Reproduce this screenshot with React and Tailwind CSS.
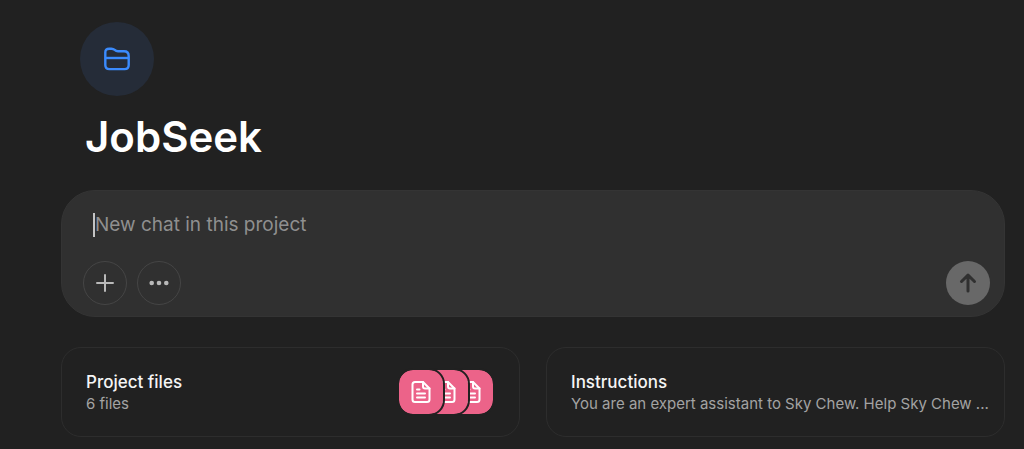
import React from "react";

function FolderIcon() {
  return (
    <svg width="26" height="24" viewBox="0 0 26 24" fill="none" stroke="#3b8bfd" strokeWidth="2.4" strokeLinejoin="round" aria-hidden="true">
      <path d="M1.300 18V5.600C1.300 3.200 2.700 1.700 5.200 1.700H7.400C8.900 1.700 9.800 2.100 10.700 2.900C11.700 3.900 12.500 4.300 14 4.300H20C23.200 4.300 24.700 5.900 24.700 9V18C24.700 20.800 23.400 22.100 20.600 22.100H5.400C2.600 22.100 1.300 20.800 1.300 18Z" />
      <path d="M1.300 11H24.700" />
    </svg>
  );
}

function DocumentIcon() {
  return (
    <svg width="20" height="24" viewBox="0 0 20 24" fill="none" stroke="#ffffff" strokeWidth="2" strokeLinecap="round" strokeLinejoin="round" aria-hidden="true">
      <path d="M12 2H4C2.400 2 1.500 2.900 1.500 4.500V19.500C1.500 21.100 2.400 22 4 22H16C17.600 22 18.500 21.100 18.500 19.500V8.500L12 2Z" />
      <path d="M12 2V6.500C12 7.800 12.700 8.500 14 8.500H18.500" />
      <path d="M6 9.500H8.500M6 13.500H14M6 17.500H14" />
    </svg>
  );
}

function FileTile({ className }) {
  return (
    <span className={`box-content flex h-11 w-11 items-center justify-center rounded-[16px] border-2 border-[#212121] bg-[#ec6389] bg-clip-padding ${className}`}>
      <DocumentIcon />
    </span>
  );
}

function RoundButton({ label, children }) {
  return (
    <button type="button" aria-label={label} className="flex h-11 w-11 items-center justify-center rounded-full border border-[#454545] text-[#b9b9b9]">
      {children}
    </button>
  );
}

function Card({ title, detail, children }) {
  return (
    <button type="button" className="flex min-w-0 items-center justify-between gap-4 rounded-[20px] border border-[#2d2d2d] py-[22px] pr-[14px] pl-6 text-left">
      <span className="min-w-0">
        <span className="block text-[17px] leading-6 font-medium text-[#f5f5f5]">{title}</span>
        <span className="block truncate text-[15px] leading-5 text-[#a3a3a3]">{detail}</span>
      </span>
      {children}
    </button>
  );
}

export default function App() {
  return (
    <main className="min-h-screen bg-[#212121] pt-[22px] pr-[19px] pb-3 pl-[61px] font-['Inter',sans-serif] text-white">
      <header className="pl-[19px]">
        <div className="flex h-[74px] w-[74px] items-center justify-center rounded-full bg-[#252c38]">
          <FolderIcon />
        </div>
        <h1 className="mt-[17px] pl-[5px] text-[42px] leading-[48px] font-semibold">JobSeek</h1>
      </header>

      <form className="mt-[29px] rounded-[34px] border border-[#343434] bg-[#303030] px-[14px] pt-5 pb-[11px]" onSubmit={(e) => e.preventDefault()}>
        <div className="flex items-center pl-[17px]">
          <span className="h-6 w-[2px] bg-[#c4c4c4]" aria-hidden="true" />
          <input aria-label="New chat in this project" placeholder="New chat in this project" className="min-w-0 flex-1 bg-transparent text-[19px] leading-7 outline-none placeholder:text-[#8f8f8f]" />
        </div>
        <div className="mt-[22px] flex items-center gap-[10px] pl-[7px]">
          <RoundButton label="Add">
            <svg width="18" height="18" viewBox="0 0 18 18" fill="none" stroke="currentColor" strokeWidth="2" strokeLinecap="round">
              <path d="M9 1V17M1 9H17" />
            </svg>
          </RoundButton>
          <RoundButton label="More options">
            <svg width="20" height="6" viewBox="0 0 20 6" fill="currentColor">
              <circle cx="2.700" cy="3" r="2.300" />
              <circle cx="10" cy="3" r="2.300" />
              <circle cx="17.300" cy="3" r="2.300" />
            </svg>
          </RoundButton>
          <button type="submit" aria-label="Send" className="ml-auto flex h-11 w-11 items-center justify-center rounded-full bg-[#686868] text-[#303030]">
            <svg width="18" height="20" viewBox="0 0 18 20" fill="none" stroke="currentColor" strokeWidth="3" strokeLinecap="round" strokeLinejoin="round">
              <path d="M9 18V2.500M2.500 8.500L9 2.200L15.500 8.500" />
            </svg>
          </button>
        </div>
      </form>

      <section className="mt-[30px] grid grid-cols-2 gap-[26px]">
        <Card title="Project files" detail="6 files">
          <span className="mr-[10px] -my-1 flex shrink-0">
            <FileTile className="relative z-20" />
            <FileTile className="relative z-10 -ml-[23px]" />
            <FileTile className="-ml-[23px]" />
          </span>
        </Card>
        <Card title="Instructions" detail="You are an expert assistant to Sky Chew. Help Sky Chew ..." />
      </section>
    </main>
  );
}
